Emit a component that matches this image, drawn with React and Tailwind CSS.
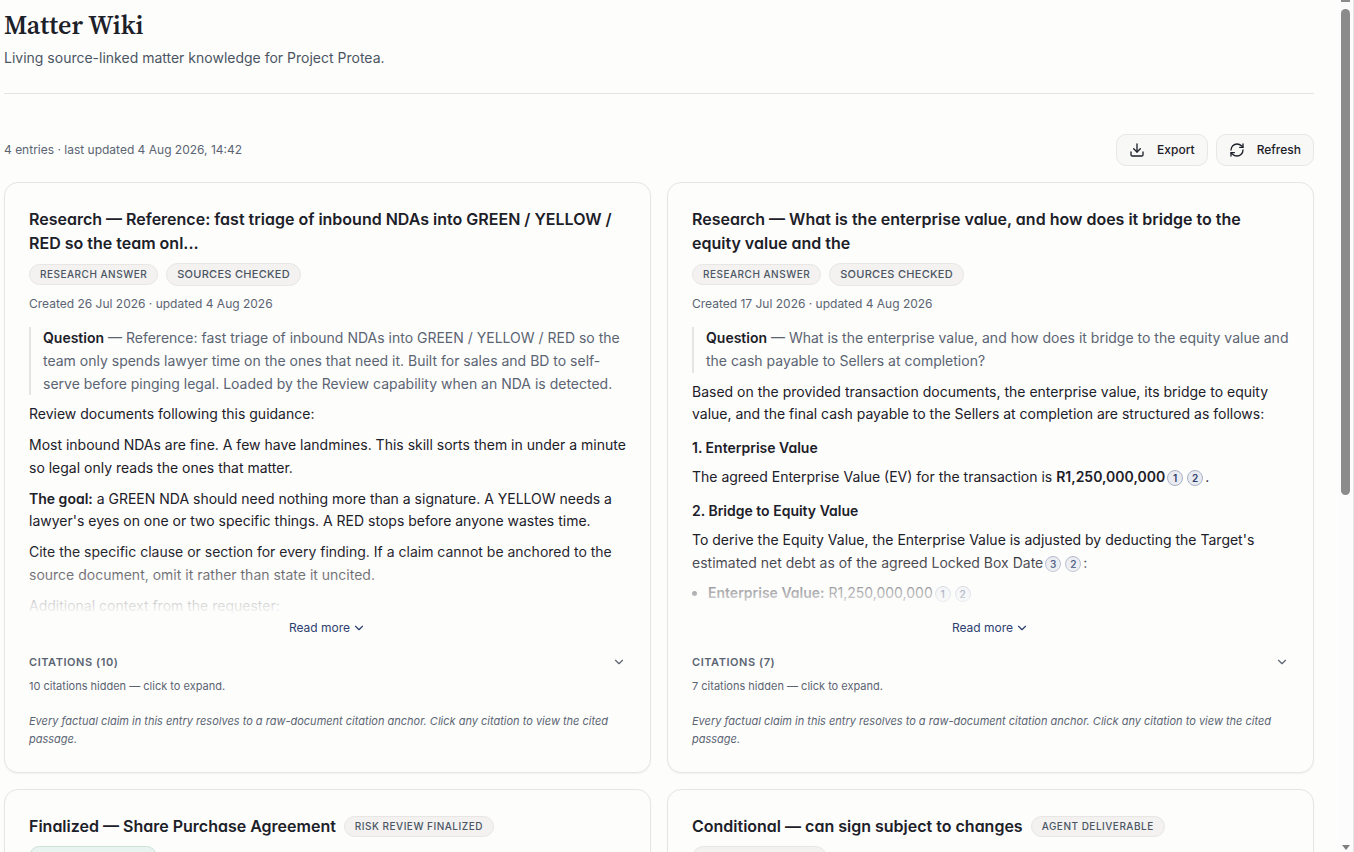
import React, { useState } from 'react';
import { ChevronDown, Download, RefreshCw } from 'lucide-react';
import clsx from 'clsx';

const Pill = ({ children, tone = 'neutral', large }) => (
    <span className={clsx(
        'inline-flex items-center rounded-full border uppercase font-medium px-2.5 py-0.5',
        large ? 'text-[11px] leading-[17px] tracking-wide' : 'text-[10px] leading-[15px] tracking-wider',
        tone === 'green' ? 'bg-[#e9f4f0] border-[#c9e0d8] text-[#2f6b58]' : 'bg-[#f3f2f1] border-[#e7e6e5] text-[#4b5563]'
    )}>
        {children}
    </span>
)

const Strong = ({ children }) => (
    <strong className="font-semibold text-[#1c2028] [font-feature-settings:'cv11']">{children}</strong>
)

const Cite = ({ n }) => (
    <button className="inline-flex items-center justify-center align-middle w-4 h-4 mx-0.5 rounded-full border border-[#a9b1c6] bg-[#e9ebf0] text-[10px] leading-none font-semibold text-[#2d3f6e]">
        {n}
    </button>
)

const Question = ({ children }) => (
    <blockquote className="border-l-2 border-[#e5e5e5] pl-3 text-[#5b6472]">
        <Strong>Question</Strong> — {children}
    </blockquote>
)

const SectionTitle = ({ children }) => (
    <h3 className="pt-1 leading-5 font-semibold [font-feature-settings:'cv11']">{children}</h3>
)

const ToolButton = ({ icon: Icon, children }) => (
    <button className="flex items-center h-8 px-3 gap-3 rounded-[10px] border border-[#e7e7e6] bg-[#f8f8f7] hover:bg-[#f1f1f0] text-xs font-medium text-[#1c2028]">
        <Icon className="w-4 h-4" />
        {children}
    </button>
)

const EntryCard = ({ title, pills, inline, dates, citations, children }) => {
    const [expanded, setExpanded] = useState(false);

    return (
        <article className="min-w-0 rounded-[14px] border border-[#e6e6e5] bg-[#fdfdfc] p-6 shadow-xs">
            <div className="flex flex-wrap items-center gap-2">
                <h2 className={clsx("text-base leading-6 font-semibold text-[#1c2028] [font-feature-settings:'cv11']", !inline && 'w-full')}>{title}</h2>
                {pills}
            </div>
            <div className="mt-[9px] text-xs leading-[18px] text-[#5b6472]">{dates}</div>
            <div className={clsx('relative mt-3.5 text-sm leading-relaxed', !expanded && 'h-72 overflow-hidden')}>
                <div className="space-y-2">{children}</div>
                {!expanded && <div className="absolute inset-x-0 bottom-0 h-16 bg-linear-to-t from-[#fdfdfc] to-transparent" />}
            </div>
            <div className="flex justify-center mt-[5px]">
                <button onClick={() => setExpanded(!expanded)} className="flex items-center gap-0.5 text-xs text-[#2d3f6e]">
                    {expanded ? 'Read less' : 'Read more'}
                    <ChevronDown className="w-3.5 h-3.5" />
                </button>
            </div>
            <div className="mt-4 text-[#5b6472]">
                <button className="flex items-center justify-between w-full text-[11px] leading-5 font-semibold uppercase tracking-wider">
                    Citations ({citations})
                    <ChevronDown className="w-3.5 h-3.5" />
                </button>
                <p className="mt-1 text-[11px] leading-5">{citations} citations hidden — click to expand.</p>
                <p className="mt-4 text-[11px] leading-[18px] italic">
                    Every factual claim in this entry resolves to a raw-document citation anchor. Click any citation to view the cited passage.
                </p>
            </div>
        </article>
    )
}

const App = () => {
    return (
        <div className="flex h-screen overflow-hidden border-r border-[#e5e5e5] bg-[#fdfdfc] font-['Inter',sans-serif] text-[#1c2028]">
            <main className="flex-1 min-w-0 overflow-hidden pl-1 pr-6 pt-[9px]">
                <header className="border-b border-[#e5e5e5] pb-[25px]">
                    <h1 className="font-['Source_Serif_4','Noto_Serif','Liberation_Serif',serif] text-[26px] leading-8 font-semibold">Matter Wiki</h1>
                    <p className="mt-[7px] text-sm leading-5 text-[#4b5563]">Living source-linked matter knowledge for Project Protea.</p>
                </header>
                <div className="mt-10 flex items-center justify-between">
                    <span className="text-xs text-[#5b6472]">4 entries · last updated 4 Aug 2026, 14:42</span>
                    <div className="flex gap-2">
                        <ToolButton icon={Download}>Export</ToolButton>
                        <ToolButton icon={RefreshCw}>Refresh</ToolButton>
                    </div>
                </div>
                <div className="mt-4 grid grid-cols-2 gap-4">
                    <EntryCard
                        title="Research — Reference: fast triage of inbound NDAs into GREEN / YELLOW / RED so the team onl..."
                        pills={<><Pill>Research answer</Pill><Pill large>Sources checked</Pill></>}
                        dates="Created 26 Jul 2026 · updated 4 Aug 2026"
                        citations={10}
                    >
                        <Question>
                            Reference: fast triage of inbound NDAs into GREEN / YELLOW / RED so the team only spends lawyer time on the ones that need it. Built for sales and BD to self-serve before pinging legal. Loaded by the Review capability when an NDA is detected.
                        </Question>
                        <p>Review documents following this guidance:</p>
                        <p>Most inbound NDAs are fine. A few have landmines. This skill sorts them in under a minute so legal only reads the ones that matter.</p>
                        <p><Strong>The goal:</Strong> a GREEN NDA should need nothing more than a signature. A YELLOW needs a lawyer's eyes on one or two specific things. A RED stops before anyone wastes time.</p>
                        <p>Cite the specific clause or section for every finding. If a claim cannot be anchored to the source document, omit it rather than state it uncited.</p>
                        <p>Additional context from the requester:</p>
                    </EntryCard>
                    <EntryCard
                        title="Research — What is the enterprise value, and how does it bridge to the equity value and the"
                        pills={<><Pill>Research answer</Pill><Pill large>Sources checked</Pill></>}
                        dates="Created 17 Jul 2026 · updated 4 Aug 2026"
                        citations={7}
                    >
                        <Question>
                            What is the enterprise value, and how does it bridge to the equity value and the cash payable to Sellers at completion?
                        </Question>
                        <p>Based on the provided transaction documents, the enterprise value, its bridge to equity value, and the final cash payable to the Sellers at completion are structured as follows:</p>
                        <SectionTitle>1. Enterprise Value</SectionTitle>
                        <p>The agreed Enterprise Value (EV) for the transaction is <Strong>R1,250,000,000</Strong><Cite n={1} /><Cite n={2} />.</p>
                        <SectionTitle>2. Bridge to Equity Value</SectionTitle>
                        <p>To derive the Equity Value, the Enterprise Value is adjusted by deducting the Target's estimated net debt as of the agreed Locked Box Date<Cite n={3} /><Cite n={2} />:</p>
                        <ul className="list-disc pl-4">
                            <li><Strong>Enterprise Value:</Strong> R1,250,000,000<Cite n={1} /><Cite n={2} /></li>
                        </ul>
                    </EntryCard>
                    <EntryCard
                        inline
                        title="Finalized — Share Purchase Agreement"
                        pills={<><Pill>Risk review finalized</Pill><Pill tone="green">Sources checked</Pill></>}
                        dates="Created 26 Jul 2026 · updated 4 Aug 2026"
                        citations={4}
                    />
                    <EntryCard
                        inline
                        title="Conditional — can sign subject to changes"
                        pills={<><Pill>Agent deliverable</Pill><Pill large>Sources checked</Pill></>}
                        dates="Created 26 Jul 2026 · updated 4 Aug 2026"
                        citations={4}
                    />
                </div>
            </main>
            <div aria-hidden="true" className="flex flex-col items-center w-[15px] shrink-0 bg-[#fcfcfc]">
                <div className="w-[9px] h-0.5 bg-[#8b8b8b]" />
                <div className="mt-[7px] w-[9px] h-[57%] rounded-full bg-[#8b8b8b]" />
                <svg className="mt-auto mb-0.5 w-2 h-[5px]" viewBox="0 0 8 5" fill="#7f7f7f"><path d="M0 0h8L4 5z" /></svg>
            </div>
        </div>
    )
}

export default App;
